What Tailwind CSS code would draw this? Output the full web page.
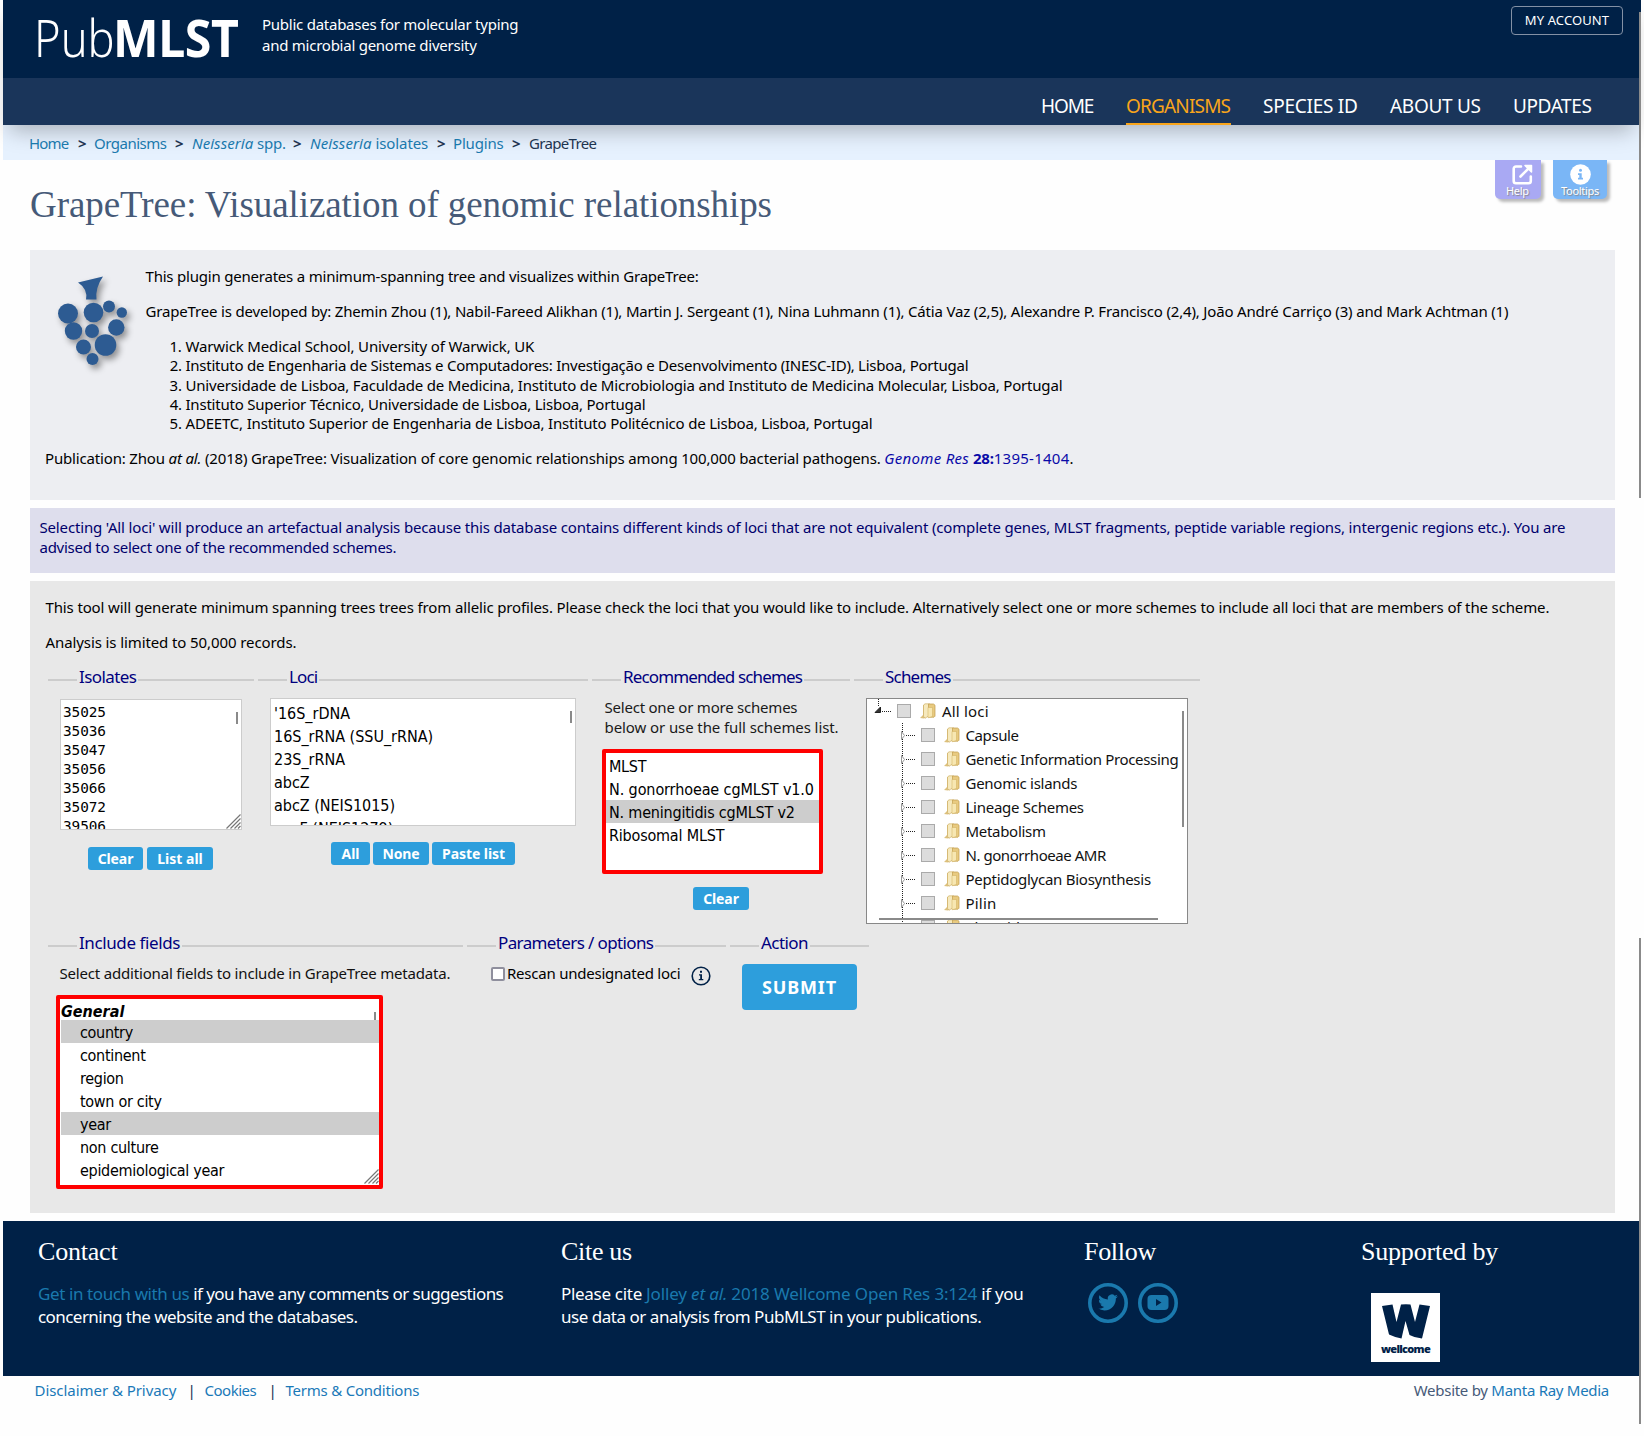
<!DOCTYPE html>
<html lang="en">
<head>
<meta charset="utf-8">
<title>GrapeTree - PubMLST</title>
<script src="https://cdn.jsdelivr.net/npm/@tailwindcss/browser@4"></script>
</head>
<body class="relative h-[1436px] overflow-hidden bg-[#fefefe] font-['Noto_Sans',sans-serif] text-[15px] leading-5 tracking-[-0.18px] text-black whitespace-nowrap">
<svg class="hidden">
  <symbol id="folder" viewBox="0 0 16 16">
    <path d="M3 2.500 5 1h3v12l-4 2.500-4-.5 3-3z" fill="#dcc07c"/>
    <path d="M3.500 2 5 .8h4.500v11.500l-4.500 3-1.500-2z" fill="#f6e9bd" stroke="#c9a75a" stroke-width=".6"/>
    <path d="M8.500 1h5l1.500 1.200v11l-1 1H8.500z" fill="#e8ca80" stroke="#c09c4b" stroke-width=".7"/>
    <path d="M8 4.500h4.500v9L8 14.800z" fill="#f7e7b2" stroke="#cfac5b" stroke-width=".5"/>
  </symbol>
  <symbol id="grip" viewBox="0 0 16 16">
    <path d="M1.500 15.500l14-14M5.500 15.500l10-10M9.500 15.500l6-6M13 15.500l2.500-2.500" stroke="#777" stroke-width="1.200" fill="none"/>
  </symbol>
</svg>

<div class="ml-[3px] w-[1636px]">
  <div class="relative z-10 shadow-[0_12px_20px_-6px_rgba(0,0,0,0.26)]">
    <header class="flex h-[78px] bg-[#002147] text-white">
      <div class="flex h-[73px] w-[259px] items-center pl-[31px] text-[52px] leading-none">
        <span class="inline-block w-[79px] origin-left scale-x-[0.87] font-light tracking-[0px]">Pub</span><span class="inline-block origin-left scale-x-[0.93] font-bold tracking-[-0.5px]">MLST</span>
      </div>
      <p class="pt-[14px] leading-[21px] tracking-[-0.25px]">Public databases for molecular typing<br>and microbial genome diversity</p>
      <div class="ml-auto mr-4 mt-[6px] flex h-[29px] w-[112px] items-center justify-center rounded border border-[#8491a5] pb-[2px] text-[13px] tracking-[0.1px]">MY ACCOUNT</div>
    </header>
    <nav class="flex h-[47px] justify-end gap-8 bg-[#1a355a] pr-[47px] pt-[12px] text-[19px] leading-[32px] text-white">
      <a class="w-[53px] tracking-[-1.1px]">HOME</a>
      <a class="h-[35px] w-[105px] border-b-2 border-[#f9a51a] tracking-[-0.83px] text-[#f9a51a]">ORGANISMS</a>
      <a class="w-[95px] tracking-[-0.25px]">SPECIES ID</a>
      <a class="w-[91px] tracking-[-0.3px]">ABOUT US</a>
      <a class="w-[79px] tracking-[-0.4px]">UPDATES</a>
    </nav>
  </div>
  <div class="flex h-[35px] bg-[#e6f1fe] pl-[26px] text-[#1a79ad]">
    <div class="relative z-20 flex items-center gap-[8px] pt-[2px] pb-[1px]">
      <a class="w-[41px] tracking-[-0.8px]">Home</a><b class="w-[8px] text-[#1d3450]">&gt;</b>
      <a class="w-[73px] tracking-[-0.5px]">Organisms</a><b class="w-[9px] text-[#1d3450]">&gt;</b>
      <a class="w-[93px]"><i class="tracking-[0.05px]">Neisseria</i> spp.</a><b class="w-[9px] text-[#1d3450]">&gt;</b>
      <a class="w-[119px] tracking-[-0.1px]"><i class="tracking-[0.1px]">Neisseria</i> isolates</a><b class="w-[8px] text-[#1d3450]">&gt;</b>
      <a class="w-[51px]">Plugins</a><b class="w-[9px] text-[#1d3450]">&gt;</b>
      <span class="tracking-[-0.66px] text-[#1d3450]">GrapeTree</span>
    </div>
  </div>

  <main class="ml-[27px] w-[1585px]">
    <div class="flex h-[90px] justify-between">
      <h1 class="flex items-center font-['Liberation_Serif',serif] text-[37px] tracking-[-0.08px] text-[#465a78]">GrapeTree: Visualization of genomic relationships</h1>
      <div class="mr-[8px] flex gap-[12px] text-[11px] leading-3 tracking-[-0.3px] text-white [text-shadow:1px_1px_1px_#888]">
        <div class="flex h-[39px] w-[46px] flex-col rounded-b-[5px] bg-[#a9a9f3] pl-[11px] shadow-[3px_3px_3px_#bbb]">
          <svg class="ml-[6px] mt-[4px] h-[21px] w-[21px]" viewBox="0 0 21 21" fill="none" stroke="#fff" stroke-width="2.600" stroke-linecap="round" stroke-linejoin="round"><path d="M9 2.500H4A2.300 2.300 0 0 0 1.700 4.800V17A2.300 2.300 0 0 0 4 19.300h12.500A2.300 2.300 0 0 0 18.800 17v-4.500M8.500 12.500 18 3"/><path d="M13 1.500h6.500V8z" fill="#fff" stroke-width="1.500"/></svg>
          <span>Help</span>
        </div>
        <div class="flex h-[39px] w-[54px] flex-col items-center rounded-b-[5px] bg-[#7ab6f6] shadow-[3px_3px_3px_#bbb]">
          <svg class="mt-[4px] h-[21px] w-[21px]" viewBox="0 0 21 21"><circle cx="10.500" cy="10.500" r="10.300" fill="#fff"/><circle cx="10.500" cy="6.300" r="1.500" fill="#7ab6f6"/><path d="M8 9.200h3.700v4.600H13v1.800H8v-1.800h1.300V11H8z" fill="#7ab6f6"/></svg>
          <span>Tooltips</span>
        </div>
      </div>
    </div>

    <section class="h-[250px] bg-[#edeef2] pl-[15px] pt-[16px]">
      <div class="flex">
        <svg class="mt-[4px] h-[100px] w-[100px] drop-shadow-[3px_4px_3px_rgba(0,0,0,0.4)]" viewBox="45 270 100 100" fill="#2d5b92"><path d="M78 282.500 103 276.500Q95 288 96.500 299.500H86Q88 289 78 282.500z"/><circle cx="68" cy="313.500" r="10"/><circle cx="93.500" cy="312.500" r="9.800"/><circle cx="109" cy="306.500" r="6"/><circle cx="121.800" cy="312.500" r="5.200"/><circle cx="73.500" cy="331" r="8.700"/><circle cx="92" cy="331" r="7"/><circle cx="116.300" cy="327.500" r="8.200"/><circle cx="83.500" cy="347" r="7.500"/><circle cx="105.500" cy="345" r="10.800"/><circle cx="92.500" cy="359" r="6"/></svg>
        <div class="pl-[0.500px]">
          <p class="tracking-[-0.21px]">This plugin generates a minimum-spanning tree and visualizes within GrapeTree:</p>
          <p class="mt-[15px] tracking-[-0.17px]">GrapeTree is developed by: Zhemin Zhou (1), Nabil-Fareed Alikhan (1), Martin J. Sergeant (1), Nina Luhmann (1), Cátia Vaz (2,5), Alexandre P. Francisco (2,4), João André Carriço (3) and Mark Achtman (1)</p>
          <ol class="mt-4 list-decimal pl-[40px] leading-[19.300px]">
            <li class="tracking-[-0.15px]">Warwick Medical School, University of Warwick, UK</li>
            <li class="tracking-[-0.244px]">Instituto de Engenharia de Sistemas e Computadores: Investigação e Desenvolvimento (INESC-ID), Lisboa, Portugal</li>
            <li class="tracking-[-0.185px]">Universidade de Lisboa, Faculdade de Medicina, Instituto de Microbiologia and Instituto de Medicina Molecular, Lisboa, Portugal</li>
            <li class="tracking-[-0.216px]">Instituto Superior Técnico, Universidade de Lisboa, Lisboa, Portugal</li>
            <li class="tracking-[-0.187px]">ADEETC, Instituto Superior de Engenharia de Lisboa, Instituto Politécnico de Lisboa, Lisboa, Portugal</li>
          </ol>
        </div>
      </div>
      <p class="mt-[15px] tracking-[-0.165px]">Publication: Zhou <i>at al.</i> (2018) GrapeTree: Visualization of core genomic relationships among 100,000 bacterial pathogens. <a class="text-[#0a0aa8]"><i class="tracking-[0.3px]">Genome Res</i> <b>28:</b><span class="tracking-[0.25px]">1395-1404</span></a>.</p>
    </section>

    <section class="mt-2 h-[65px] bg-[#dedeed] pl-[9.500px] pt-[9px] text-[#00006c]">
      <p class="tracking-[-0.162px]">Selecting 'All loci' will produce an artefactual analysis because this database contains different kinds of loci that are not equivalent (complete genes, MLST fragments, peptide variable regions, intergenic regions etc.). You are</p>
      <p class="tracking-[-0.264px]">advised to select one of the recommended schemes.</p>
    </section>

    <section class="mt-2 h-[632px] bg-[#e8e8e8] pt-[16px]">
      <p class="ml-[15.500px] tracking-[-0.136px]">This tool will generate minimum spanning trees trees from allelic profiles. Please check the loci that you would like to include. Alternatively select one or more schemes to include all loci that are members of the scheme.</p>
      <p class="ml-[15.500px] mt-[15px] tracking-[-0.1px]">Analysis is limited to 50,000 records.</p>

      <div class="ml-[18px] mt-4 flex h-[266px] gap-1">
        <fieldset class="w-[206px] border-t-2 border-[#ccc]">
          <legend class="ml-[29px] h-6 px-[2px] text-[17px] leading-[18px] tracking-[-0.57px] text-[#00007e]">Isolates</legend>
          <div class="ml-[12px] mt-[7px] flex h-[131px] w-[182px] justify-between overflow-hidden border border-[#ccc] bg-white font-['DejaVu_Sans_Mono',monospace] text-[14.400px] leading-[19px] tracking-[-0.08px]">
            <div class="pl-[2px] pt-[3px]">35025<br>35036<br>35047<br>35056<br>35066<br>35072<br>39506</div>
            <div class="flex flex-col items-end justify-between pt-[12px]"><div class="mr-[3px] h-[12px] w-[2px] bg-[#8a8a8a]"></div><svg class="h-4 w-4"><use href="#grip"/></svg></div>
          </div>
          <div class="ml-10 mt-[17px] flex gap-1 text-[14px] font-bold leading-[23px] text-white">
            <button class="h-[23px] w-[55px] rounded-[3px] bg-[#2d9edc] tracking-[-0.1px]">Clear</button>
            <button class="h-[23px] w-[66px] rounded-[3px] bg-[#2d9edc] tracking-[0px]">List all</button>
          </div>
        </fieldset>
        <fieldset class="w-[330px] border-t-2 border-[#ccc]">
          <legend class="ml-[29px] h-6 px-[2px] text-[17px] leading-[18px] tracking-[-0.9px] text-[#00007e]">Loci</legend>
          <div class="ml-[12px] mt-[6px] flex h-[128px] w-[306px] justify-between overflow-hidden border border-[#ccc] bg-white font-['DejaVu_Sans_Condensed','DejaVu_Sans',sans-serif] text-[16px] leading-[23px] tracking-[-0.02px]">
            <div class="pl-[3px] pt-[3px]">'16S_rDNA<br>16S_rRNA (SSU_rRNA)<br>23S_rRNA<br>abcZ<br>abcZ (NEIS1015)<br>aceF (NEIS1279)</div>
            <div class="mr-[3px] mt-[12px] h-[12px] w-[2px] bg-[#8a8a8a]"></div>
          </div>
          <div class="ml-[73px] mt-[16px] flex gap-[3px] text-[14px] font-bold leading-[23px] text-white">
            <button class="h-[23px] w-[39px] rounded-[3px] bg-[#2d9edc] tracking-[0px]">All</button>
            <button class="h-[23px] w-[56px] rounded-[3px] bg-[#2d9edc] tracking-[-0.1px]">None</button>
            <button class="h-[23px] w-[83px] rounded-[3px] bg-[#2d9edc] tracking-[-0.07px]">Paste list</button>
          </div>
        </fieldset>
        <fieldset class="w-[258px] border-t-2 border-[#ccc]">
          <legend class="ml-[29px] h-6 px-[2px] text-[17px] leading-[18px] tracking-[-0.87px] text-[#00007e]">Recommended schemes</legend>
          <p class="ml-[12.500px] mt-[5px] text-[#1a1a1a]"><span class="tracking-[-0.22px]">Select one or more schemes</span><br><span class="tracking-[-0.09px]">below or use the full schemes list.</span></p>
          <div class="ml-[10px] mt-[12px] h-[125px] w-[221px] rounded-[2px] border-4 border-[#f00] bg-white font-['DejaVu_Sans_Condensed','DejaVu_Sans',sans-serif] text-[16px] leading-[23px]">
            <div class="h-[24px] pl-[3px] pt-[2px] tracking-[-0.3px]">MLST</div>
            <div class="h-[23px] pl-[3px] pt-px tracking-[-0.1px]">N. gonorrhoeae cgMLST v1.0</div>
            <div class="h-[23px] bg-[#cdcdcd] pl-[3px] pt-px tracking-[-0.2px]">N. meningitidis cgMLST v2</div>
            <div class="pl-[3px] pt-px tracking-[-0.2px]">Ribosomal MLST</div>
          </div>
          <button class="ml-[101px] mt-[13px] block h-[23px] w-[56px] rounded-[3px] bg-[#2d9edc] text-[14px] font-bold leading-[23px] tracking-[-0.1px] text-white">Clear</button>
        </fieldset>
        <fieldset class="w-[346px] border-t-2 border-[#ccc]">
          <legend class="ml-[29px] h-6 px-[2px] text-[17px] leading-[18px] tracking-[-0.8px] text-[#00007e]">Schemes</legend>
          <div class="relative ml-[12px] mt-[6px] h-[226px] w-[322px] overflow-hidden border border-[#888] bg-white leading-6 text-[#111]">
            <svg class="absolute left-0 top-0 h-[224px] w-[60px]" fill="none" stroke="#222" stroke-dasharray="1 1" shape-rendering="crispEdges">
              <path d="M11.500 0v8M15 12.500h9M35.500 24v200M39 36.500h10M39 60.500h10M39 84.500h10M39 108.500h10M39 132.500h10M39 156.500h10M39 180.500h10M39 204.500h10"/>
              <g stroke-dasharray="none" shape-rendering="auto"><path d="M13.500 8v5.500H8z" fill="#333"/><path d="M34.500 32.500v8l3-4zM34.500 56.500v8l3-4zM34.500 80.500v8l3-4zM34.500 104.500v8l3-4zM34.500 128.500v8l3-4zM34.500 152.500v8l3-4zM34.500 176.500v8l3-4zM34.500 200.500v8l3-4z" fill="#fff" stroke="#999"/></g>
            </svg>
            <div class="flex h-6 items-center pl-[30px]"><i class="h-[14px] w-[14px] border border-[#aaa] bg-[#dcdcdc]"></i><svg class="ml-[9px] mr-[6px] h-4 w-4"><use href="#folder"/></svg><span class="tracking-[0.2px]">All loci</span></div>
            <div class="pl-[54px]">
              <div class="flex h-6 items-center"><i class="h-[14px] w-[14px] border border-[#aaa] bg-[#dcdcdc]"></i><svg class="ml-[9px] mr-[5.500px] h-4 w-4"><use href="#folder"/></svg><span class="tracking-[-0.4px]">Capsule</span></div>
              <div class="flex h-6 items-center"><i class="h-[14px] w-[14px] border border-[#aaa] bg-[#dcdcdc]"></i><svg class="ml-[9px] mr-[5.500px] h-4 w-4"><use href="#folder"/></svg><span class="tracking-[-0.33px]">Genetic Information Processing</span></div>
              <div class="flex h-6 items-center"><i class="h-[14px] w-[14px] border border-[#aaa] bg-[#dcdcdc]"></i><svg class="ml-[9px] mr-[5.500px] h-4 w-4"><use href="#folder"/></svg><span class="tracking-[-0.27px]">Genomic islands</span></div>
              <div class="flex h-6 items-center"><i class="h-[14px] w-[14px] border border-[#aaa] bg-[#dcdcdc]"></i><svg class="ml-[9px] mr-[5.500px] h-4 w-4"><use href="#folder"/></svg><span class="tracking-[-0.27px]">Lineage Schemes</span></div>
              <div class="flex h-6 items-center"><i class="h-[14px] w-[14px] border border-[#aaa] bg-[#dcdcdc]"></i><svg class="ml-[9px] mr-[5.500px] h-4 w-4"><use href="#folder"/></svg><span class="tracking-[-0.3px]">Metabolism</span></div>
              <div class="flex h-6 items-center"><i class="h-[14px] w-[14px] border border-[#aaa] bg-[#dcdcdc]"></i><svg class="ml-[9px] mr-[5.500px] h-4 w-4"><use href="#folder"/></svg><span class="tracking-[-0.45px]">N. gonorrhoeae AMR</span></div>
              <div class="flex h-6 items-center"><i class="h-[14px] w-[14px] border border-[#aaa] bg-[#dcdcdc]"></i><svg class="ml-[9px] mr-[5.500px] h-4 w-4"><use href="#folder"/></svg><span class="tracking-[-0.26px]">Peptidoglycan Biosynthesis</span></div>
              <div class="flex h-6 items-center"><i class="h-[14px] w-[14px] border border-[#aaa] bg-[#dcdcdc]"></i><svg class="ml-[9px] mr-[5.500px] h-4 w-4"><use href="#folder"/></svg><span class="tracking-[0.2px]">Pilin</span></div>
              <div class="flex h-6 items-center"><i class="h-[14px] w-[14px] border border-[#aaa] bg-[#dcdcdc]"></i><svg class="ml-[9px] mr-[5.500px] h-4 w-4"><use href="#folder"/></svg><span class="tracking-[-0.2px]">Plasmids</span></div>
            </div>
            <div class="absolute left-[315px] top-[12px] h-[116px] w-[2px] bg-[#8a8a8a]"></div>
            <div class="absolute left-[12px] top-[219px] h-[2px] w-[279px] bg-[#8a8a8a]"></div>
          </div>
        </fieldset>
      </div>

      <div class="ml-[18px] flex gap-1">
        <fieldset class="w-[415px] border-t-2 border-[#ccc]">
          <legend class="ml-[29px] h-6 px-[2px] text-[17px] leading-[18px] tracking-[-0.4px] text-[#00007e]">Include fields</legend>
          <p class="ml-[11.500px] mt-[5px] text-[#111]">Select additional fields to include in GrapeTree metadata.</p>
          <div class="ml-[8px] mt-[12px] flex h-[194px] w-[327px] flex-col rounded-[2px] border-4 border-[#f00] bg-white pl-[1px] font-['DejaVu_Sans_Condensed','DejaVu_Sans',sans-serif] text-[16px] leading-[23px] tracking-[-0.3px]">
            <div class="flex h-[21px] justify-between pt-px"><b class="italic tracking-[0px]">General</b><i class="mr-[3px] mt-[12px] h-[12px] w-[2px] shrink-0 bg-[#8a8a8a]"></i></div>
            <div class="h-[23px] bg-[#cdcdcd] pl-[19px] pt-px">country</div>
            <div class="h-[23px] pl-[19px] pt-px">continent</div>
            <div class="h-[23px] pl-[19px] pt-px">region</div>
            <div class="h-[23px] pl-[19px] pt-px">town or city</div>
            <div class="h-[23px] bg-[#cdcdcd] pl-[19px] pt-px">year</div>
            <div class="h-[23px] pl-[19px] pt-px">non culture</div>
            <div class="flex h-[26px] justify-between pl-[19px] pt-px">epidemiological year<svg class="mt-[9px] h-4 w-4 shrink-0"><use href="#grip"/></svg></div>
          </div>
        </fieldset>
        <fieldset class="w-[259px] border-t-2 border-[#ccc]">
          <legend class="ml-[29px] h-6 px-[2px] text-[17px] leading-[18px] tracking-[-0.62px] text-[#00007e]">Parameters / options</legend>
          <div class="ml-[24px] mt-[6px] flex h-5 items-center">
            <i class="mr-[2px] h-[14px] w-[14px] rounded-[2px] border-2 border-[#8f8f9d] bg-white"></i>
            <span class="pb-[2px] tracking-[-0.23px]">Rescan undesignated loci</span>
            <svg class="ml-[11px] mt-[4px] h-5 w-5" viewBox="0 0 20 20"><circle cx="10" cy="10" r="8.800" fill="none" stroke="#002147" stroke-width="1.600"/><path d="M9 4.800h2v1.900H9zM8 8.200h3v4.900h1.300v1.200H7.800v-1.200h1.400V9.400H8z" fill="#002147"/></svg>
          </div>
        </fieldset>
        <fieldset class="w-[139px] border-t-2 border-[#ccc]">
          <legend class="ml-[29px] h-6 px-[2px] text-[17px] leading-[18px] tracking-[-0.55px] text-[#00007e]">Action</legend>
          <button class="ml-[12px] mt-[6px] block h-[46px] w-[115px] rounded bg-[#2d9edc] text-[18px] font-bold tracking-[0.83px] text-white">SUBMIT</button>
        </fieldset>
      </div>
    </section>
  </main>

  <footer class="mt-2 grid h-[155px] grid-cols-[523px_523px_277px_1fr] bg-[#002147] pl-[35px] pt-[15px] text-[17px] leading-[23px] text-white">
    <div>
      <h2 class="font-['Liberation_Serif',serif] text-[26px] leading-8 tracking-[-0.2px]">Contact</h2>
      <p class="mt-[14px] tracking-[-0.56px]"><a class="tracking-[-0.4px] text-[#1a79ad]">Get in touch with us</a> if you have any comments or suggestions<br>concerning the website and the databases.</p>
    </div>
    <div>
      <h2 class="font-['Liberation_Serif',serif] text-[26px] leading-8 tracking-[-0.3px]">Cite us</h2>
      <p class="mt-[14px] tracking-[-0.47px]"><span class="tracking-[-0.3px]">Please cite <a class="tracking-[-0.15px] text-[#1a79ad]">Jolley <i>et al.</i> 2018 Wellcome Open Res 3:124</a> if you</span><br>use data or analysis from PubMLST in your publications.</p>
    </div>
    <div>
      <h2 class="font-['Liberation_Serif',serif] text-[26px] leading-8 tracking-[-0.3px]">Follow</h2>
      <div class="ml-1 mt-[15px] flex gap-[10px]">
        <svg class="h-10 w-10" viewBox="0 0 40 40"><circle cx="20" cy="20" r="18.200" fill="none" stroke="#1a79ad" stroke-width="3.600"/><path transform="translate(10.200 9.600) scale(.82)" fill="#1a79ad" d="M23.950 4.570a10 10 0 0 1-2.820.77 4.960 4.960 0 0 0 2.160-2.720c-.95.550-2 .96-3.130 1.180a4.920 4.920 0 0 0-8.380 4.480C7.690 8.100 4.070 6.130 1.640 3.160a4.820 4.820 0 0 0-.67 2.480c0 1.710.87 3.210 2.190 4.100a4.900 4.900 0 0 1-2.230-.62v.06a4.920 4.920 0 0 0 3.950 4.830 5 5 0 0 1-2.210.08 4.940 4.940 0 0 0 4.600 3.420A9.870 9.870 0 0 1 0 19.540a14 14 0 0 0 7.550 2.210c9.050 0 14-7.500 14-13.980 0-.21 0-.42-.02-.63a9.940 9.940 0 0 0 2.460-2.550z"/></svg>
        <svg class="h-10 w-10" viewBox="0 0 40 40"><circle cx="20" cy="20" r="18.200" fill="none" stroke="#1a79ad" stroke-width="3.600"/><rect x="9.500" y="12" width="21" height="15" rx="4" fill="#1a79ad"/><path d="M18 16v7l5.500-3.500z" fill="#002147"/></svg>
      </div>
    </div>
    <div>
      <h2 class="font-['Liberation_Serif',serif] text-[26px] leading-8 tracking-[-0.2px]">Supported by</h2>
      <div class="ml-[10px] mt-[25px] flex h-[69px] w-[69px] flex-col items-center bg-white">
        <svg class="mt-[11px] h-[35px] w-[48px]" viewBox="0 0 48 35" fill="#002147"><path d="M0 2 10.500.5 14.500 18 19 .5Q24 0 28.500.5L33 18 37.500.5 48 2 40 34.500Q33 34 27.500 31L23.500 17 19.500 34.500Q12 33 7 30.500z"/></svg>
        <span class="mt-[3px] text-[11px] font-black leading-[13px] tracking-[-0.7px] text-[#002147]">wellcome</span>
      </div>
    </div>
  </footer>
  <div class="flex h-[28px] items-center justify-between pl-[31.500px] pr-[30px] text-[#1a79b8]">
    <div class="flex"><a class="w-[153px] tracking-[-0.05px]">Disclaimer &amp; Privacy</a><span class="w-[17px] text-[#1d3450]">|</span><a class="w-[64px] tracking-[-0.5px]">Cookies</a><span class="w-[17px] text-[#1d3450]">|</span><a class="tracking-[-0.22px]">Terms &amp; Conditions</a></div>
    <div class="tracking-[-0.28px]"><span class="text-[#465a78]">Website by</span> Manta Ray Media</div>
  </div>
</div>

<div class="absolute left-[1639px] top-0 z-20 h-[12px] w-[2px] bg-[#002147]"></div>
<div class="absolute left-[1639px] top-[12px] z-20 h-[486px] w-[2px] bg-[#8a8a8a]"></div>
<div class="absolute left-[1639px] top-[938px] z-20 h-[486px] w-[2px] bg-[#8a8a8a]"></div>
</body>
</html>
